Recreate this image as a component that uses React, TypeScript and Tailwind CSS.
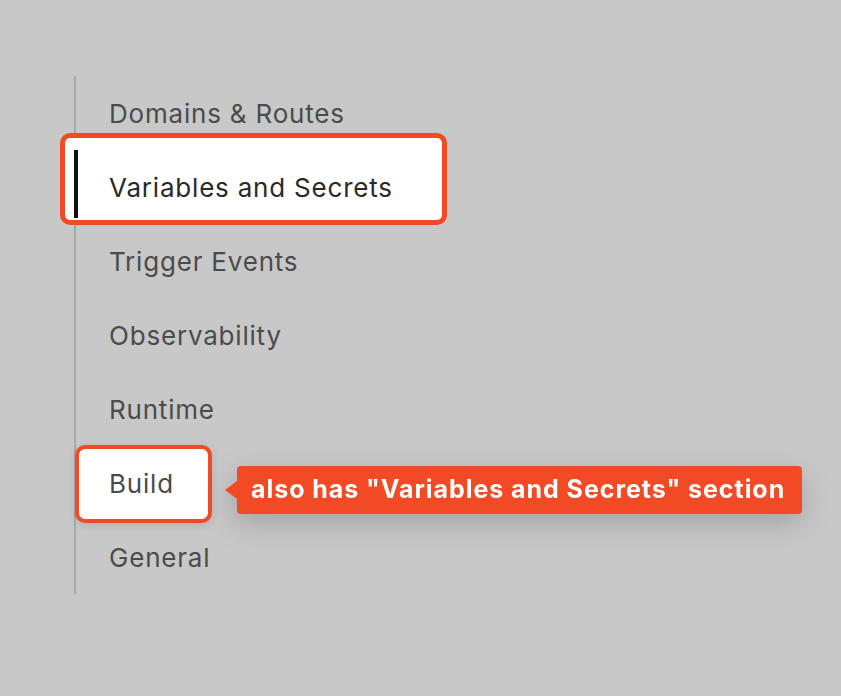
import React from 'react';

const items = [
  'Domains & Routes',
  'Variables and Secrets',
  'Trigger Events',
  'Observability',
  'Runtime',
  'Build',
  'General',
];

export default function App() {
  return (
    <div className="w-full h-[696px] bg-[#c8c8c8] font-['Inter','Noto_Sans',sans-serif] overflow-hidden">
      <div className="pt-[76px] pl-[74px]">
        <nav className="border-l-2 border-[#a9a9a9] w-[600px]">
          {items.map((label) => {
            const active = label === 'Variables and Secrets';
            const build = label === 'Build';
            return (
              <div key={label} className="relative h-[74px] flex items-center">
                {active && (
                  <>
                    <div className="absolute left-[-16px] top-[-17px] w-[387px] h-[92px] rounded-[10px] border-[5px] border-[#f24a25] bg-white" />
                    <div className="absolute left-[-2px] top-0 h-[68px] w-[4px] bg-[#111]" />
                  </>
                )}
                {build && (
                  <>
                    <div className="absolute left-[-1px] top-[-1px] w-[137px] h-[78px] rounded-[10px] border-4 border-[#f24a25] bg-white shadow-[0_2px_8px_rgba(0,0,0,0.12)]" />
                    <div className="absolute left-[149px] top-[20px] flex items-center drop-shadow-[0_10px_14px_rgba(0,0,0,0.18)]">
                      <div className="w-0 h-0 border-y-[9px] border-y-transparent border-r-[12px] border-r-[#f24a25]" />
                      <div className="h-[48px] w-[565px] pl-[14px] flex items-center rounded-[4px] bg-[#f24a25] text-white text-[25px] font-bold tracking-[0.95px] whitespace-nowrap">
                        also has "Variables and Secrets" section
                      </div>
                    </div>
                  </>
                )}
                <span
                  className={`relative pl-[33px] text-[26px] tracking-[0.8px] ${
                    active ? 'text-[#2a2a2a]' : 'text-[#4b4b4b]'
                  }`}
                >
                  {label}
                </span>
              </div>
            );
          })}
        </nav>
      </div>
    </div>
  );
}
